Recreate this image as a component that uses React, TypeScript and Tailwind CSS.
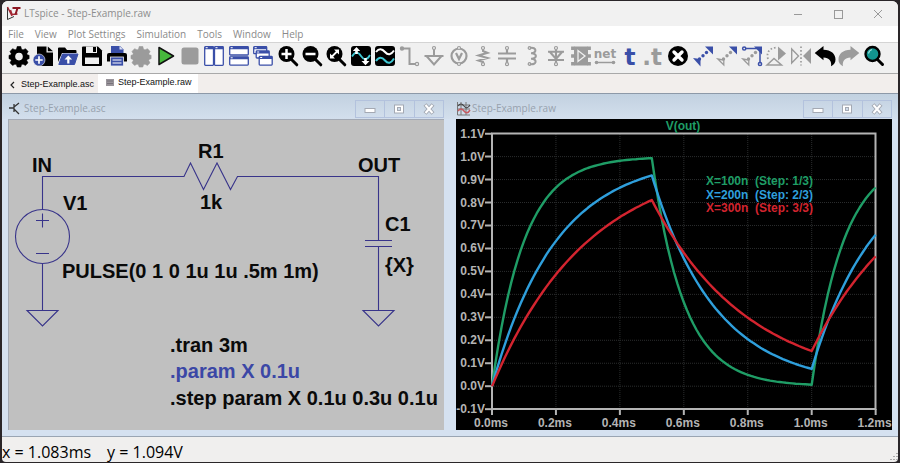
import type { ReactNode } from "react"

const BLUE = "#3a4fa8"
const GREY = "#9b9b9b"

const menus = ["File", "View", "Plot Settings", "Simulation", "Tools", "Window", "Help"]

const gearPath =
  "M8.2 0.5h3.6l.6 2.6 1.6.8 2.5-1.2 2.6 2.8-1.3 2.3.6 1.2 1.7.3v3.4l-1.8.5-.6 1.4 1.3 2.2-2.6 2.6-2.4-1.3-1.6.7-.6 2.2H8.2l-.7-2.2-1.5-.7-2.4 1.3L1 16.800l1.300-2.200-.6-1.400L0 12.700V9.300L1.700 9l.6-1.200L1 5.500l2.600-2.800L6.100 3.900l1.500-.8z"

function Gear({ color }: { color: string }) {
  return (
    <>
      <path d={gearPath} fill={color} stroke={color} strokeWidth="0.6" strokeLinejoin="round" />
      {color === "#000" && <circle cx="10" cy="10.600" r="3.800" fill="#f0f0f0" />}
    </>
  )
}

function Lens({ children }: { children: ReactNode }) {
  return (
    <>
      <path d="M12.500 12.500l6.300 6.300" stroke="#000" strokeWidth="3" strokeLinecap="round" />
      <circle cx="8.500" cy="8" r="8" fill="#000" />
      {children}
    </>
  )
}

function MiniWindow({ x, y, w, h }: { x: number; y: number; w: number; h: number }) {
  return (
    <>
      <rect x={x} y={y} width={w} height={h} rx="0.800" fill="#fff" stroke={BLUE} strokeWidth="1.300" />
      <path d={`M${x} ${y + 1.2}h${w}`} stroke={BLUE} strokeWidth="2.600" />
      <path d={`M${x + 1} ${y + 1}h2`} stroke="#fff" strokeWidth="1" />
    </>
  )
}

const dots = (color: string) => (
  <>
    <circle cx="6.500" cy="13" r="1.700" fill={color} />
    <circle cx="10" cy="9.800" r="1.700" fill={color} />
    <circle cx="13.500" cy="6.500" r="1.700" fill={color} />
  </>
)

const toolbar: { label: string; icon: ReactNode }[] = [
  { label: "Settings", icon: <Gear color="#000" /> },
  {
    label: "New schematic",
    icon: (
      <>
        <path d="M4 0.500h9.500v6H20V20H4z" fill="#000" />
        <path d="M14.800 0.500L20 5.300h-5.200z" fill="#000" />
        <circle cx="6" cy="14" r="6" fill={BLUE} stroke="#f0f0f0" strokeWidth="0.600" />
        <path d="M6 10.300v7.400M2.300 14h7.400" stroke="#fff" strokeWidth="1.700" />
      </>
    ),
  },
  {
    label: "Open",
    icon: (
      <>
        <path d="M0 2.500Q0 1.500 1 1.500h6l2 2.500h8.500q1 0 1 1V7H4L0 16z" fill="#000" />
        <path d="M4.500 8H20l-3.500 10.500H0.800z" fill={BLUE} stroke={BLUE} strokeLinejoin="round" />
        <path d="M10.300 17.500v-5" stroke="#fff" strokeWidth="2.200" />
        <path d="M6.500 13.500l3.800-4 3.800 4z" fill="#fff" />
      </>
    ),
  },
  {
    label: "Save",
    icon: (
      <>
        <path d="M1 0.500h15l4 4V19q0 1-1 1H1q-1 0-1-1V1.500q0-1 1-1z" fill="#000" />
        <path d="M4 0.500h11v6.500H4zM3 11.500h14V18H3z" fill="#f0f0f0" />
        <path d="M11 1h3v5h-3z" fill="#000" />
      </>
    ),
  },
  {
    label: "Print",
    icon: (
      <>
        <path d="M4 0h9l3.500 3.500V8H4z" fill={BLUE} />
        <path d="M12.500 0v3.500H16z" fill="#dfe4f6" />
        <path d="M2 7h16q2 0 2 2v6.500H0V9q0-2 2-2z" fill="#000" />
        <rect x="3.500" y="11" width="13" height="9" fill={BLUE} stroke="#f0f0f0" strokeWidth="0.800" />
        <path d="M5.500 14h9M5.500 17h9" stroke="#fff" strokeWidth="1.200" />
      </>
    ),
  },
  { label: "Configure analysis", icon: <Gear color={GREY} /> },
  {
    label: "Run",
    icon: (
      <path d="M3 1.500l14.500 8.500L3 18.500z" fill="#47b83c" stroke="#111" strokeWidth="1.500" strokeLinejoin="round" />
    ),
  },
  { label: "Stop", icon: <rect x="1.500" y="1.500" width="17" height="17" rx="2.500" fill={GREY} /> },
  {
    label: "Tile vertically",
    icon: (
      <>
        <MiniWindow x={0.700} y={0.700} w={8.800} h={18.600} />
        <MiniWindow x={10.500} y={0.700} w={8.800} h={18.600} />
      </>
    ),
  },
  {
    label: "Tile horizontally",
    icon: (
      <>
        <MiniWindow x={0.700} y={0.700} w={18.600} h={8.300} />
        <MiniWindow x={0.700} y={10.800} w={18.600} h={8.300} />
      </>
    ),
  },
  {
    label: "Cascade",
    icon: (
      <>
        <MiniWindow x={0.700} y={0.700} w={13} h={7} />
        <MiniWindow x={3.200} y={5} w={13} h={7} />
        <MiniWindow x={6.200} y={10.500} w={13} h={8.600} />
      </>
    ),
  },
  {
    label: "Zoom in",
    icon: (
      <Lens>
        <path d="M8.500 3v10M3.500 8h10" stroke="#fff" strokeWidth="2.500" />
      </Lens>
    ),
  },
  {
    label: "Zoom out",
    icon: (
      <Lens>
        <path d="M3.500 8h10" stroke="#fff" strokeWidth="2.500" />
      </Lens>
    ),
  },
  {
    label: "Zoom to fit",
    icon: (
      <Lens>
        <path d="M5.500 11l6-6" stroke="#fff" strokeWidth="1.800" />
        <path d="M8 3.500h5v5zM4 7.500v5h5z" fill="#fff" />
      </Lens>
    ),
  },
  {
    label: "Autorange",
    icon: (
      <>
        <rect width="20" height="20" rx="3" fill="#000" />
        <path d="M1 10.500C4 5.500 7 5.500 10 10s6 4.500 9-1" fill="none" stroke="#3fc8d4" strokeWidth="1.800" />
        <path d="M5.500 8V4M14.500 12v4" stroke="#fff" strokeWidth="2.600" />
        <path d="M1.800 5L5.500 1l3.700 4zM10.500 15l4 4.300 4-4.300z" fill="#fff" />
      </>
    ),
  },
  {
    label: "Add trace",
    icon: (
      <>
        <rect width="20" height="20" rx="3" fill="#000" />
        <path d="M1 6C4 2 7 2.500 10 6s6 3 9-1.500" fill="none" stroke="#fff" strokeWidth="2" />
        <path d="M1 15C4 10.500 7 11 10 14.500s6 3 9-2" fill="none" stroke="#3fc8d4" strokeWidth="2" />
      </>
    ),
  },
  {
    label: "Wire",
    icon: (
      <g fill="none" stroke={GREY} strokeWidth="2">
        <circle cx="2" cy="2.500" r="1.200" fill={GREY} />
        <path d="M2 2.500h7.500V18H15" />
        <circle cx="17" cy="18" r="1.600" strokeWidth="1.200" />
      </g>
    ),
  },
  {
    label: "Ground",
    icon: (
      <g fill="none" stroke={GREY} strokeWidth="2">
        <circle cx="10" cy="2" r="1.500" strokeWidth="1.200" />
        <path d="M10 3.500V10M0.500 10h19M2.500 10L10 18.500 17.500 10" />
      </g>
    ),
  },
  {
    label: "Voltage source",
    icon: (
      <g fill="none" stroke={GREY} strokeWidth="2.200">
        <circle cx="10" cy="10" r="7.500" />
        <path d="M7 7l3 6 3-6" />
        <circle cx="10" cy="2" r="1.500" fill="#f0f0f0" strokeWidth="1.200" />
        <circle cx="10" cy="18" r="1.500" fill="#f0f0f0" strokeWidth="1.200" />
      </g>
    ),
  },
  {
    label: "Resistor",
    icon: (
      <g fill="none" stroke={GREY} strokeWidth="2">
        <path d="M10 3.500V5l4.500 1.800L5.500 9.500l9 2.500-9 2.500L10 16v1" />
        <circle cx="10" cy="2" r="1.500" strokeWidth="1.200" />
        <circle cx="10" cy="18.200" r="1.500" strokeWidth="1.200" />
      </g>
    ),
  },
  {
    label: "Capacitor",
    icon: (
      <g fill="none" stroke={GREY} strokeWidth="2.200">
        <path d="M1 7.500h18M1 12.500h18M10 3.500v4M10 12.500v4" />
        <circle cx="10" cy="2" r="1.500" strokeWidth="1.200" />
        <circle cx="10" cy="18.200" r="1.500" strokeWidth="1.200" />
      </g>
    ),
  },
  {
    label: "Inductor",
    icon: (
      <g fill="none" stroke={GREY} strokeWidth="2.100">
        <path d="M8 2c7-1.500 7 5.500 1 5.300 6.500-.2 6.500 5.600 0 5.400 6.500-.2 6 6.800-1 5.300" />
        <circle cx="7.500" cy="2" r="1.300" strokeWidth="1.200" />
        <circle cx="7.500" cy="18" r="1.300" strokeWidth="1.200" />
      </g>
    ),
  },
  {
    label: "Diode",
    icon: (
      <g fill="none" stroke={GREY} strokeWidth="2.100">
        <path d="M2 5.800h16M4 6l6 7 6-7M2 14h16M10 3.500v13" />
        <circle cx="10" cy="2" r="1.500" strokeWidth="1.200" />
        <circle cx="10" cy="18.200" r="1.500" strokeWidth="1.200" />
      </g>
    ),
  },
  {
    label: "Component",
    icon: (
      <>
        <rect x="3" y="0.500" width="14" height="19" fill={GREY} />
        <path
          d="M1.800 0.500v19M18.200 0.500v19"
          stroke={GREY}
          strokeWidth="3.400"
          strokeDasharray="3.500 4.200"
        />
        <path d="M7 4.500v11l7-5.500z" fill={GREY} stroke="#f0f0f0" strokeWidth="1.300" />
      </>
    ),
  },
  {
    label: "Net name",
    icon: (
      <>
        <text x="10" y="12" textAnchor="middle" fontSize="12" fontWeight="700" fill={GREY} fontFamily="DejaVu Sans, sans-serif">
          net
        </text>
        <path d="M1 16.500h18" stroke={GREY} strokeWidth="1.600" />
        <circle cx="1.500" cy="16.500" r="1.800" fill={GREY} />
        <circle cx="18.500" cy="16.500" r="1.800" fill={GREY} />
      </>
    ),
  },
  {
    label: "Text",
    icon: (
      <text x="10" y="19" textAnchor="middle" fontSize="23" fontWeight="700" fill={BLUE} fontFamily="DejaVu Sans, sans-serif">
        t
      </text>
    ),
  },
  {
    label: "SPICE directive",
    icon: (
      <text x="8" y="19" textAnchor="middle" fontSize="23" fontWeight="700" fill={GREY} fontFamily="DejaVu Sans, sans-serif">
        .t
      </text>
    ),
  },
  {
    label: "Delete",
    icon: (
      <>
        <circle cx="10" cy="10" r="10" fill="#000" />
        <path d="M6 6l8 8M14 6l-8 8" stroke="#fff" strokeWidth="3.400" strokeLinecap="round" />
      </>
    ),
  },
  {
    label: "Duplicate",
    icon: (
      <>
        <path d="M12 0.500H20V8.500z" fill={BLUE} />
        <path d="M0 12l7.500 1v7.500z" fill={BLUE} />
        {dots(BLUE)}
      </>
    ),
  },
  {
    label: "Move",
    icon: (
      <>
        <path d="M12 0.500H20V8.500z" fill={BLUE} />
        <path d="M0.800 13l6 1v5z" fill="none" stroke={GREY} strokeWidth="1.300" />
        {dots(GREY)}
      </>
    ),
  },
  {
    label: "Drag",
    icon: (
      <>
        <path d="M12 0.500H20V8.500z" fill={BLUE} />
        <path d="M0.800 13l6 1v5z" fill="none" stroke={GREY} strokeWidth="1.300" />
        {dots(GREY)}
        <g fill="none" stroke={BLUE} strokeWidth="1.500">
          <path d="M4 2.500h14V16" />
          <circle cx="2.200" cy="2.500" r="1.600" />
          <circle cx="18" cy="18" r="1.600" />
        </g>
      </>
    ),
  },
  {
    label: "Rotate",
    icon: (
      <>
        <path d="M12 0.500L20 7.500l-8 7z" fill={GREY} />
        <path d="M1 19l7-6.500 7.500 6.500z" fill="none" stroke={GREY} strokeWidth="1.500" />
        <path d="M2 13C0 6 4 2 10 1.500" fill="none" stroke={GREY} strokeWidth="1.800" strokeDasharray="1.600 2" />
      </>
    ),
  },
  {
    label: "Mirror",
    icon: (
      <>
        <path d="M20 2v16l-8-8z" fill={GREY} />
        <path d="M0.700 3v14L7.500 10z" fill="none" stroke={GREY} strokeWidth="1.400" />
        <path d="M10 0.500v19" stroke={GREY} strokeWidth="1.700" strokeDasharray="1.600 2" />
      </>
    ),
  },
  {
    label: "Undo",
    icon: <path d="M-0.300 7L8.500 0v3.800C16 4 20.600 8 20.500 13.500c0 3-1.500 5.500-4.500 6.700 1-5-2-8.400-7.500-8.700v2.700z" fill="#000" />,
  },
  {
    label: "Redo",
    icon: <path d="M20.300 7L11.500 0v3.800C4 4-.6 8-.5 13.500c0 3 1.500 5.500 4.500 6.700-1-5 2-8.400 7.500-8.700v2.700z" fill={GREY} />,
  },
  {
    label: "Search",
    icon: (
      <>
        <path d="M13 13l5.500 5.500" stroke="#000" strokeWidth="3" strokeLinecap="round" />
        <circle cx="8.500" cy="8" r="7" fill="#12948f" stroke="#000" strokeWidth="2.400" />
        <path d="M4.500 7.500q.5-3 3.500-4" fill="none" stroke="#9ee0dc" strokeWidth="1.200" />
      </>
    ),
  },
]

function WindowControls() {
  return (
    <div className="flex h-[18px] w-[89px] border border-[#b3c2dd] text-[#a4a9b3]">
      <button aria-label="Minimize" className="flex flex-1 items-center justify-center border-r border-[#b3c2dd]">
        <svg width="12" height="12" viewBox="0 0 12 12">
          <rect x="1" y="5.500" width="10" height="4" fill="#fff" stroke="currentColor" />
        </svg>
      </button>
      <button aria-label="Maximize" className="flex flex-1 items-center justify-center border-r border-[#b3c2dd]">
        <svg width="12" height="12" viewBox="0 0 12 12">
          <rect x="1.500" y="2" width="9" height="8" fill="#fff" stroke="currentColor" />
          <rect x="4.500" y="4.500" width="3" height="3" fill="#d0dcea" stroke="currentColor" />
        </svg>
      </button>
      <button aria-label="Close" className="flex flex-1 items-center justify-center">
        <svg width="12" height="12" viewBox="0 0 12 12">
          <path d="M2 1.500l8 9M10 1.500l-8 9" stroke="currentColor" strokeWidth="4" />
          <path d="M2.500 2l7 8M9.500 2l-7 8" stroke="#fff" strokeWidth="2" />
        </svg>
      </button>
    </div>
  )
}

function ChildWindow({ title, icon, children }: { title: string; icon: ReactNode; children: ReactNode }) {
  return (
    <section className="min-w-0 flex-1 bg-[#d5e1f0] px-1.5 pb-1.5">
      <header className="-mx-1.5 flex h-[25px] items-center bg-linear-to-b from-[#c2d1e0] to-[#d3dfed] pr-1.5 pl-1.5 pt-1">
        <svg width="15" height="15" viewBox="0 0 15 15" className="shrink-0">
          {icon}
        </svg>
        <h2 className="flex-1 pl-px text-[10px] text-[#98a2ae]">{title}</h2>
        <WindowControls />
      </header>
      {children}
    </section>
  )
}

const labels = [
  { x: 24, y: 53, text: "IN" },
  { x: 190, y: 39, text: "R1" },
  { x: 192, y: 90, text: "1k" },
  { x: 55, y: 91, text: "V1" },
  { x: 350, y: 53, text: "OUT" },
  { x: 377, y: 112, text: "C1" },
  { x: 377, y: 153, text: "{X}" },
  { x: 54, y: 159, text: "PULSE(0 1 0 1u 1u .5m 1m)" },
  { x: 162, y: 233, text: ".tran 3m" },
  { x: 162, y: 259, text: ".param X 0.1u", color: "#3b47a6" },
  { x: 162, y: 286, text: ".step param X 0.1u 0.3u 0.1u" },
]

function Schematic() {
  return (
    <svg viewBox="0 0 436 311" className="block w-full bg-[#c0c0c0]">
      <path d="M0 0.500h436M0.500 0v311" stroke="#a3a9b4" fill="none" />
      <g fill="none" stroke="#38348a" strokeWidth="1.100">
        <path d="M34.500 90.500V57.500H176L182.500 44 195.500 70.500 209 44 222.500 70.500 229.500 57.500H370.500V121.500" />
        <circle cx="34.500" cy="117.500" r="27" />
        <path d="M28 101.500h13M34.500 94.500v14M28 134.500h13" />
        <path d="M34.500 144.500v47M19 191.500h31L34.500 207z" />
        <path d="M357 121.500h27M357 127.500h27M370.500 127.500v64M355 191.500h31L370.500 207z" />
      </g>
      <g fontFamily="Liberation Sans, Arial, sans-serif" fontWeight="700" fontSize="20">
        {labels.map((l) => (
          <text key={l.text} x={l.x} y={l.y} fill={l.color ?? "#0a0a0a"}>
            {l.text}
          </text>
        ))}
      </g>
    </svg>
  )
}

const px = (ms: number) => 36 + ms * 319.7
const py = (v: number) => 267.2 - v * 229.6

// RC response to the 0.5 ms on / 0.5 ms off pulse, tau in ms
function trace(tau: number) {
  const points: string[] = []
  const peak = 1 - Math.exp(-0.5 / tau)
  const low = peak * Math.exp(-0.5 / tau)
  for (let i = 0; i <= 120; i++) {
    const t = i / 100
    let v = 1 - Math.exp(-t / tau)
    if (t > 1) v = 1 - (1 - low) * Math.exp(-(t - 1) / tau)
    else if (t > 0.5) v = peak * Math.exp(-(t - 0.5) / tau)
    points.push(`${px(t).toFixed(1)},${py(v).toFixed(1)}`)
  }
  return points.join(" ")
}

const steps = [
  { tau: 0.1, color: "#1f9d66", label: "X=100n\u00a0\u00a0(Step: 1/3)", y: 66 },
  { tau: 0.2, color: "#2f9fdc", label: "X=200n\u00a0\u00a0(Step: 2/3)", y: 80 },
  { tau: 0.3, color: "#d3242f", label: "X=300n\u00a0\u00a0(Step: 3/3)", y: 93 },
]

const volts = Array.from({ length: 13 }, (_, i) => (11 - i) / 10)
const times = Array.from({ length: 7 }, (_, i) => i / 5)

function Plot() {
  return (
    <svg viewBox="0 0 436 311" className="block w-full bg-black">
      <g stroke="#2b2d2e" strokeWidth="1" strokeDasharray="1 1">
        {volts.slice(1, -1).map((v) => (
          <path key={v} d={`M36 ${py(v)}H419`} />
        ))}
        {times.slice(1, -1).map((t) => (
          <path key={t} d={`M${px(t)} 15V290`} />
        ))}
      </g>
      <g stroke="#b4b4b4" strokeWidth="2" fill="none">
        <rect x="36" y="14.500" width="383.500" height="275.500" />
        {volts.map((v) => (
          <path key={v} d={`M29 ${py(v)}h7`} />
        ))}
        {times.map((t) => (
          <path key={t} d={`M${px(t)} 290v6`} />
        ))}
      </g>
      <g fill="none" strokeWidth="2.400" strokeLinejoin="round">
        {steps.map((s) => (
          <polyline key={s.tau} points={trace(s.tau)} stroke={s.color} />
        ))}
      </g>
      <g fontFamily="Liberation Sans, Arial, sans-serif" fontWeight="700" fontSize="12">
        {volts.map((v) => (
          <text key={v} x="29" y={py(v) + 4} textAnchor="end" fill="#b4b4b4">
            {v.toFixed(1)}V
          </text>
        ))}
        {times.map((t) => (
          <text key={t} x={px(t) - 1} y="308" textAnchor="middle" fill="#b4b4b4">
            {t.toFixed(1)}ms
          </text>
        ))}
        <text x="227" y="11" textAnchor="middle" fill="#1f9d66">
          V(out)
        </text>
        {steps.map((s) => (
          <text key={s.tau} x="250" y={s.y} fill={s.color}>
            {s.label}
          </text>
        ))}
      </g>
    </svg>
  )
}

export default function App() {
  return (
    <div className="bg-[#2a2629] px-0.5 py-px font-['Open_Sans','Noto_Sans',sans-serif]">
      <div className="overflow-hidden rounded-t-md rounded-b-sm bg-[#f0efee]">
        <header className="flex h-[25px] items-center bg-[#f1f1f1] pl-1">
          <svg width="16" height="16" viewBox="0 0 16 16" className="shrink-0">
            <path d="M1.500 1v12.500L8 10.500" fill="none" stroke="#333" strokeWidth="1" />
            <path d="M1.500 1L6 10M4.500 4L6 8.500 11.500 8" fill="none" stroke="#a32733" strokeWidth="1.500" />
            <path d="M6.500 2h8M11.500 2L9.500 8.500" fill="none" stroke="#8c1722" strokeWidth="2" />
          </svg>
          <h1 className="flex-1 pl-0.5 text-[10px] text-[#8d8d8d]">LTspice - Step-Example.raw</h1>
          <div className="flex text-[#999]">
            <button aria-label="Minimize" className="flex w-10 justify-center">
              <svg width="10" height="10" viewBox="0 0 10 10">
                <path d="M1 5.500h8" stroke="currentColor" />
              </svg>
            </button>
            <button aria-label="Maximize" className="flex w-10 justify-center">
              <svg width="10" height="10" viewBox="0 0 10 10">
                <rect x="1.500" y="1.500" width="8" height="8" fill="none" stroke="currentColor" />
              </svg>
            </button>
            <button aria-label="Close" className="flex w-10 justify-center">
              <svg width="10" height="10" viewBox="0 0 10 10">
                <path d="M1 1l8 8M9 1l-8 8" stroke="currentColor" />
              </svg>
            </button>
          </div>
        </header>

        <nav className="flex h-4 items-center gap-[11px] bg-white pl-1.5 text-[10px] text-[#8a8a8a]">
          {menus.map((m) => (
            <button key={m}>{m}</button>
          ))}
        </nav>

        <div className="flex h-8 items-center justify-between border-y border-t-[#d4d4d4] border-b-[#a9a9a9] bg-[#f0f0f0] pr-3.5 pl-[7px] pb-1">
          {toolbar.map((t) => (
            <button key={t.label} aria-label={t.label}>
              <svg width="20" height="20" viewBox="0 0 20 20" className="block overflow-visible">
                {t.icon}
              </svg>
            </button>
          ))}
        </div>

        <div
          role="tablist"
          className="flex h-5 items-stretch border-b border-[#8d99a8] bg-[#f2eeec] font-['Liberation_Sans',Arial,sans-serif] text-[9px] text-[#111]"
        >
          <button role="tab" aria-selected="false" className="flex w-24 items-center pl-[7px] pt-0.5">
            <svg width="8" height="8" viewBox="0 0 8 8" className="mr-1">
              <path d="M5 1L2 4l3 3" fill="none" stroke="#222" strokeWidth="1.200" />
            </svg>
            Step-Example.asc
          </button>
          <button role="tab" aria-selected="true" className="flex items-center gap-1 bg-white pr-1.5 pl-2 pb-0.5">
            <svg width="8" height="8" viewBox="0 0 8 8">
              <rect width="8" height="7" fill="#9a959b" />
              <path d="M1 2h6M1 4.500h6" stroke="#77727a" />
            </svg>
            Step-Example.raw
          </button>
        </div>

        <main className="flex border-b border-[#9aa5b3]">
          <ChildWindow
            title="Step-Example.asc"
            icon={
              <path d="M1 7h5M6 3v8M6 6l5-4M6 8l5 5" fill="none" stroke="#333" strokeWidth="1.300" />
            }
          >
            <Schematic />
          </ChildWindow>
          <div className="-mr-px w-px bg-[#4c5668]" />
          <ChildWindow
            title="Step-Example.raw"
            icon={
              <>
                <path d="M1.500 1v13h12.500M1 4h13M1 8h13M5 1v13M10 1v13" fill="none" stroke="#777" />
                <path d="M2 5q3-4 6 0t6-1" fill="none" stroke="#444" strokeWidth="1.200" />
                <path d="M2 10q3-4 6 0t6-1" fill="none" stroke="#c65a60" strokeWidth="1.500" />
              </>
            }
          >
            <Plot />
          </ChildWindow>
        </main>

        <footer className="flex h-[25px] items-center justify-between pt-1 text-[16px] leading-5 text-black">
          <div className="flex gap-4">
            <span>x = 1.083ms</span>
            <span>y = 1.094V</span>
          </div>
          <svg width="10" height="10" viewBox="0 0 10 10" className="self-end">
            <path d="M9 1v1M6 4v1M9 4v1M3 7v1M6 7v1M9 7v1" stroke="#aaa" strokeWidth="2" />
          </svg>
        </footer>
      </div>
    </div>
  )
}
